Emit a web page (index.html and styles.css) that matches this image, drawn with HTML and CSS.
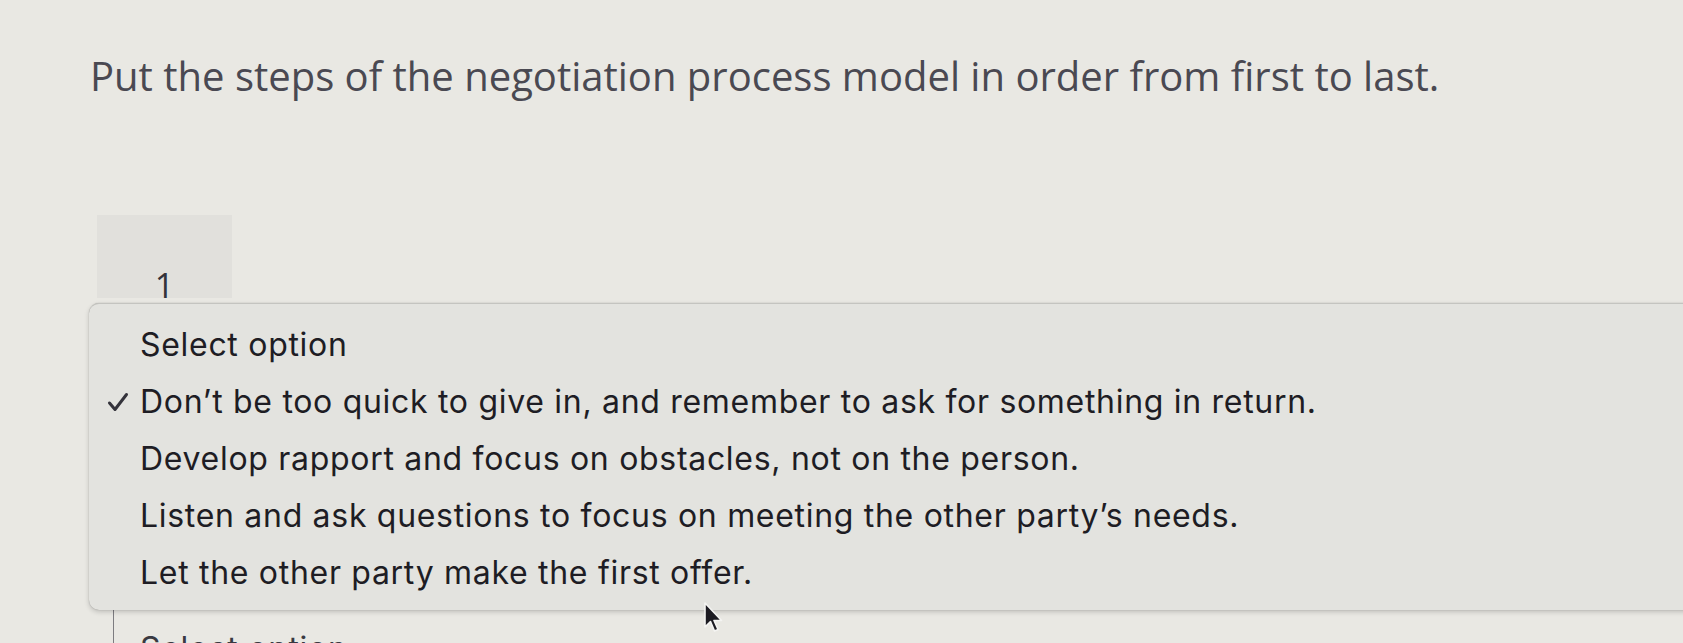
FILE: index.html
```html
<!DOCTYPE html>
<html lang="en">
<head>
    <meta charset="UTF-8">
    <meta name="viewport" content="width=device-width, initial-scale=1.0">
    <title>Ordering question</title>
    <link rel="stylesheet" href="styles.css">
</head>
<body>

    <main class="question">
        <h1 class="prompt">Put the steps of the negotiation process model in order from first to last.</h1>

        <div class="step-label">
            <span class="step-num">1</span>
        </div>

        <ul class="menu">
            <li class="menu-item"><span class="gutter"></span>Select option</li>
            <li class="menu-item"><span class="gutter">
                <svg class="check" viewBox="0 0 22 20" width="22" height="20">
                    <path d="M2.5 11 L8 17.5 L19.5 2.5" fill="none" stroke="#34333b" stroke-width="3" stroke-linecap="round" stroke-linejoin="round"/>
                </svg>
            </span>Don’t be too quick to give in, and remember to ask for something in return.</li>
            <li class="menu-item"><span class="gutter"></span>Develop rapport and focus on obstacles, not on the person.</li>
            <li class="menu-item"><span class="gutter"></span>Listen and ask questions to focus on meeting the other party’s needs.</li>
            <li class="menu-item"><span class="gutter"></span>Let the other party make the first offer.</li>
        </ul>

        <div class="select-box">Select option</div>
    </main>

    <svg class="cursor" viewBox="0 0 20 32" width="20" height="32">
        <path d="M2 1 L2 25 L7.5 19.5 L11.5 29 L15 27.5 L11 18.5 L18.5 18.5 Z" fill="#1c1b22" stroke="#f4f4f2" stroke-width="1.6" stroke-linejoin="round"/>
    </svg>

</body>
</html>
```

FILE: styles.css
```css
body {
    margin: 0;
    background-color: #e9e8e3;
    height: 643px;
    overflow: hidden;
    position: relative;
}

.question {
    display: flex;
    flex-direction: column;
}

.prompt {
    font-family: "Open Sans", sans-serif;
    font-weight: 400;
    font-size: 40px;
    color: #4a4952;
    margin: 48px 0 0 90px;
    white-space: nowrap;
}

.step-label {
    margin: 112px 0 0 97px;
    width: 135px;
    height: 83px;
    background-color: #e1e0dc;
    display: flex;
    align-items: flex-end;
    justify-content: center;
}

.step-num {
    font-family: "Open Sans", sans-serif;
    font-size: 34px;
    line-height: 25px;
    color: #34333a;
}

.menu {
    list-style: none;
    margin: 5px 0 0 89px;
    padding: 12px 0 9px 0;
    width: 1640px;
    background-color: #e3e3df;
    border-radius: 10px;
    border-top: 1px solid #c4c4c0;
    box-shadow: 0 2px 5px rgba(0, 0, 0, 0.18), 0 0 1px rgba(0, 0, 0, 0.3);
    position: relative;
    z-index: 1;
}

.menu-item {
    display: flex;
    align-items: center;
    font-family: Inter, "Noto Sans", sans-serif;
    font-size: 32px;
    letter-spacing: 0.7px;
    line-height: 57px;
    color: #1e1d24;
    white-space: nowrap;
}

.gutter {
    width: 51px;
    display: flex;
    justify-content: flex-end;
    padding-right: 11px;
    box-sizing: border-box;
}

.check {
    display: block;
}

.select-box {
    margin: 0 0 0 113px;
    padding: 19px 0 0 26px;
    border-left: 1px solid #7d7c80;
    font-family: Inter, "Noto Sans", sans-serif;
    font-size: 32px;
    letter-spacing: 0.7px;
    color: #3a3941;
    height: 60px;
}

.cursor {
    position: absolute;
    left: 703px;
    top: 602px;
    z-index: 2;
}
```
